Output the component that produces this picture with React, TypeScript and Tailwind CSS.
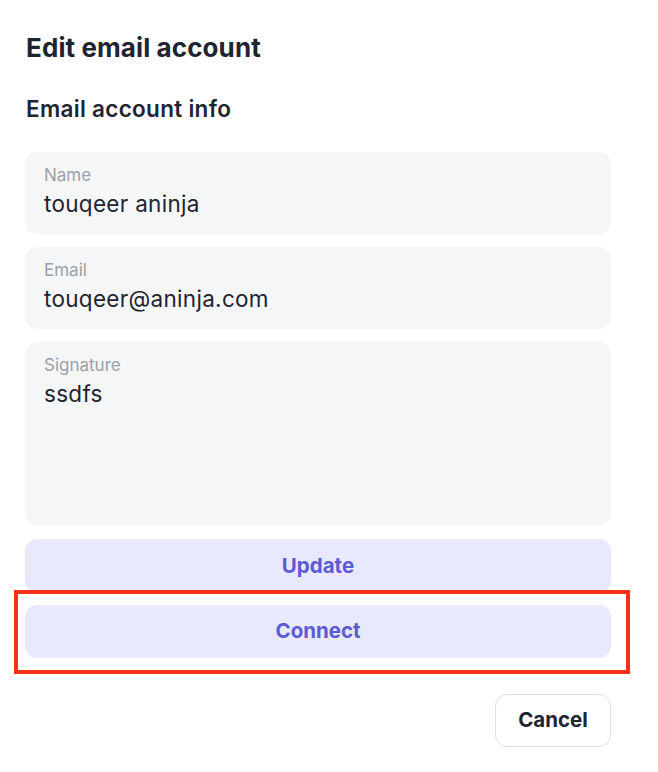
import { useState } from 'react'

type Field = {
  label: string
  value: string
  multiline?: boolean
}

const fields: Field[] = [
  { label: 'Name', value: 'touqeer aninja' },
  { label: 'Email', value: 'touqeer@aninja.com' },
  { label: 'Signature', value: 'ssdfs', multiline: true },
]

export default function App() {
  const [values] = useState(fields)

  return (
    <main className="min-h-screen bg-white font-['Inter',sans-serif] text-[#1f2430]">
      <div className="w-[586px] ml-[25px] pt-[31px]">
        <h1 className="pl-[1px] text-[26px] leading-[34px] font-bold tracking-[0.1px]">Edit email account</h1>
        <h2 className="pl-[1px] mt-[29px] text-[22.5px] leading-[30px] font-semibold tracking-[0.3px]">
          Email account info
        </h2>

        <div className="mt-[28px] flex flex-col gap-[13px]">
          {values.map((f) => (
            <div
              key={f.label}
              className={`rounded-[12px] bg-[#f5f6f8] px-[19px] pt-[12px] ${
                f.multiline ? 'h-[183px]' : 'h-[82px]'
              }`}
            >
              <div className="text-[17px] leading-[22px] text-[#9ca0a8]">{f.label}</div>
              <div className="mt-[3px] text-[22.5px] leading-[30px] tracking-[0.3px] text-[#1f2430]">
                {f.value}
              </div>
            </div>
          ))}
        </div>

        <button className="mt-[14px] w-full h-[54px] rounded-[12px] bg-[#e8e9fc] text-[20.5px] font-bold text-[#5b5bd6]">
          Update
        </button>

        {/* annotation box round the connect button */}
        <div className="relative mt-[12px]">
          <button className="w-full h-[53px] rounded-[12px] bg-[#e8e9fc] text-[20.5px] font-bold text-[#5b5bd6]">
            Connect
          </button>
          <span className="pointer-events-none absolute top-[-15px] left-[-11px] right-[-19px] bottom-[-16px] border-[4px] border-[#f2321b]" />
        </div>

        <div className="mt-[36px] flex justify-end">
          <button className="h-[53px] w-[116px] rounded-[12px] border border-[#dcdfe4] bg-white text-[20.5px] font-bold text-[#1f2430]">
            Cancel
          </button>
        </div>
      </div>
    </main>
  )
}
